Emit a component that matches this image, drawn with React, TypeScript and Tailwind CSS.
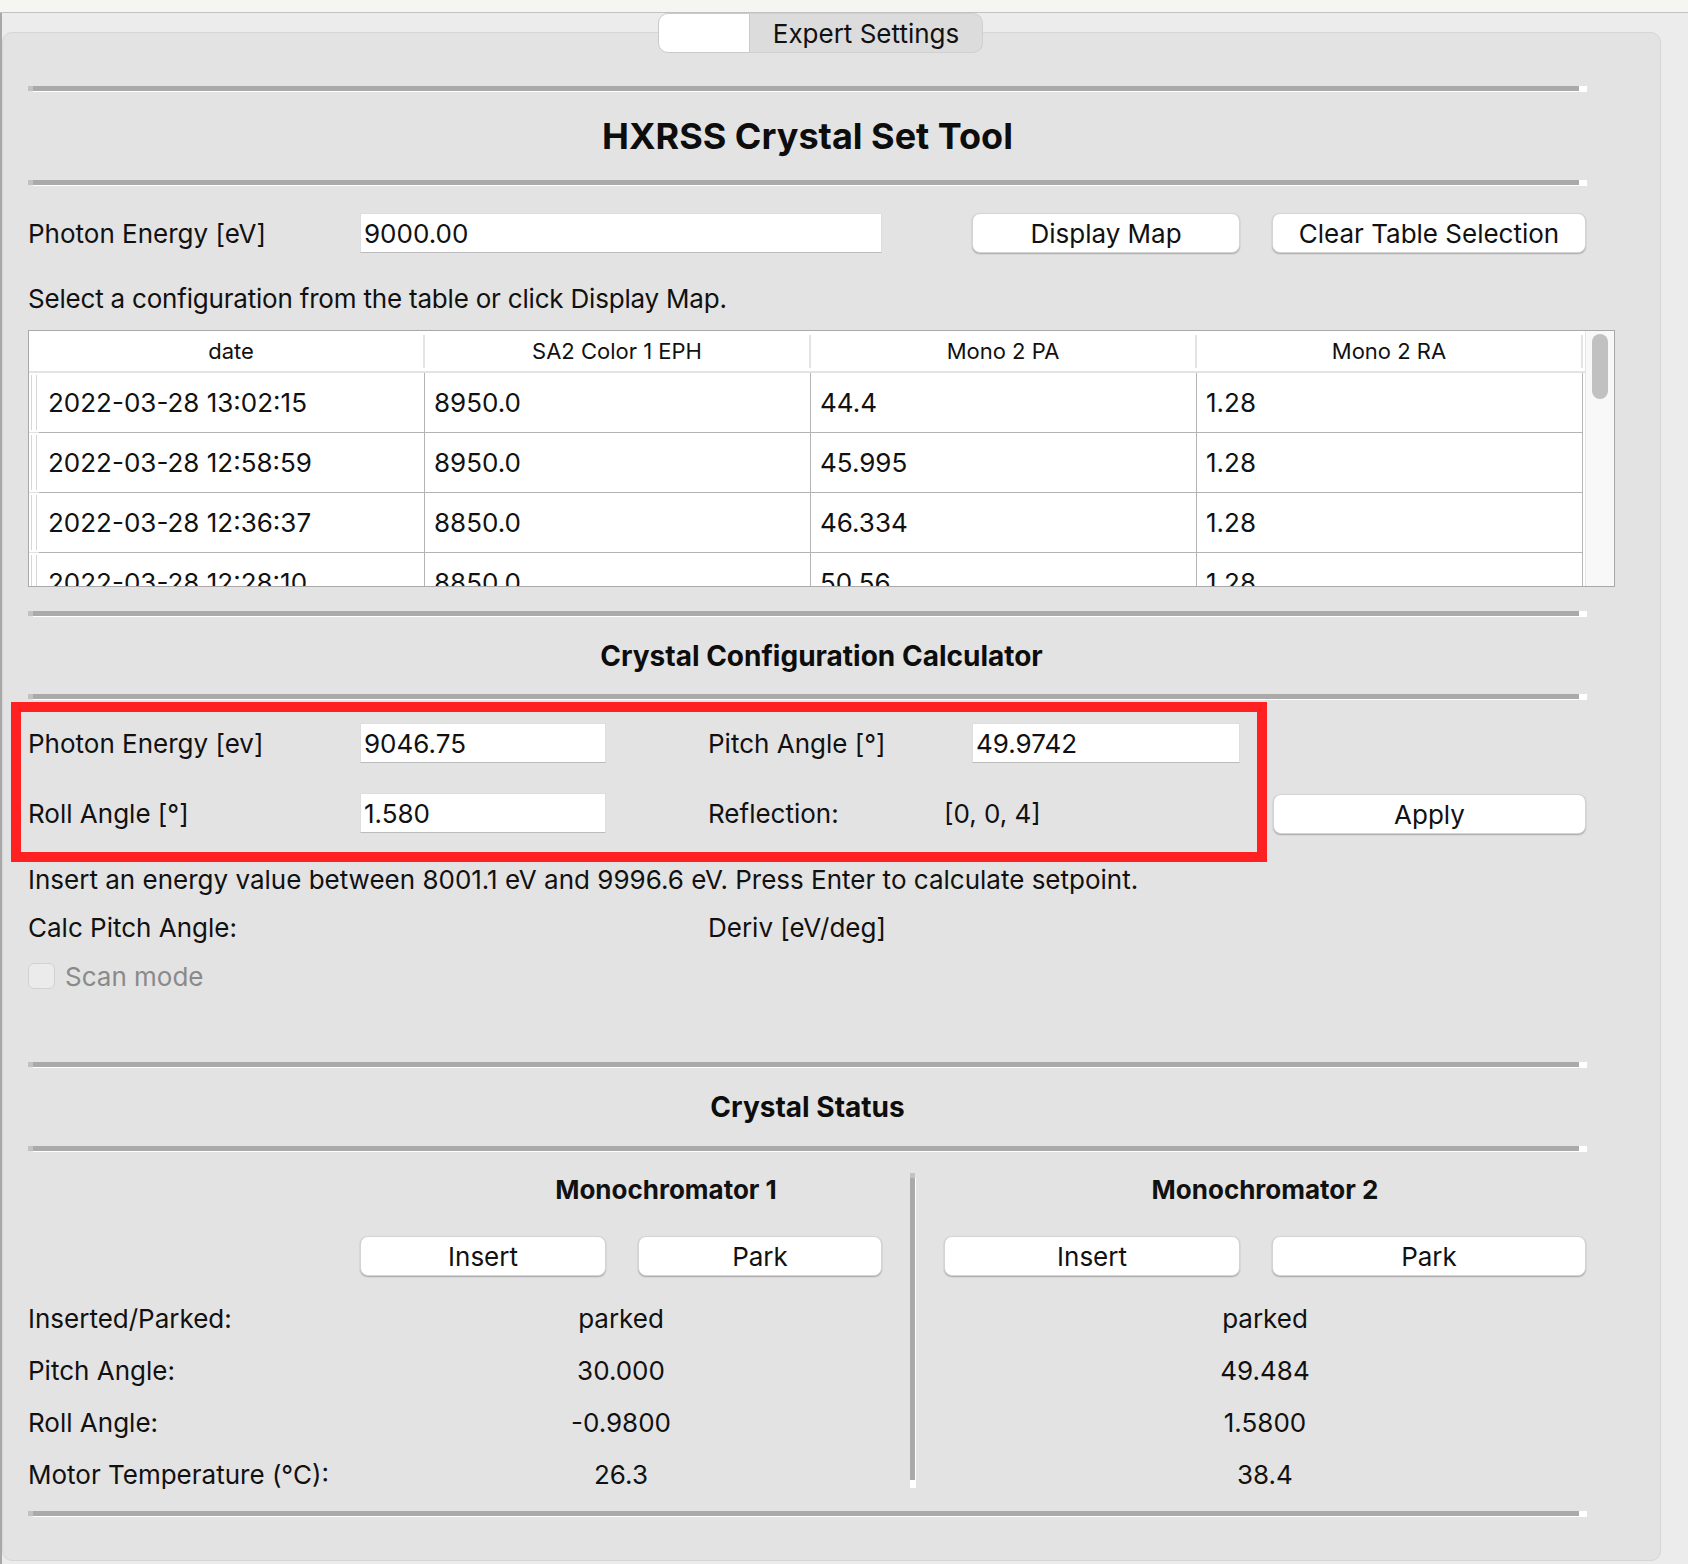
import React from "react";

function HSep() {
  return (
    <div className="w-[1559px] h-[6px] flex flex-col shrink-0">
      <div className="flex h-[5px]">
        <div className="w-[5px] bg-[#c2c2c2]" />
        <div className="flex-1 bg-[#aaaaaa]" />
        <div className="w-[8px] bg-white" />
      </div>
      <div className="h-[1px] ml-[5px] bg-white" />
    </div>
  );
}

function VSep() {
  return (
    <div className="w-[6px] h-[315px] flex shrink-0">
      <div className="w-[5px] flex flex-col">
        <div className="h-[5px] bg-[#c2c2c2]" />
        <div className="flex-1 bg-[#aaaaaa]" />
        <div className="h-[8px] bg-white" />
      </div>
      <div className="w-[1px] mt-[5px] bg-white" />
    </div>
  );
}

function Btn({ label, className }: { label: string; className: string }) {
  return (
    <div
      className={
        "h-[40px] bg-white rounded-[8px] border border-[#d4d4d4] shadow-[0_1px_1.5px_rgba(0,0,0,0.28)] flex items-center justify-center text-[26px] text-[#111] shrink-0 " +
        className
      }
    >
      {label}
    </div>
  );
}

function Input({ value, className }: { value: string; className: string }) {
  return (
    <div
      className={
        "h-[40px] bg-white border border-[#dedede] border-b-[#bcbcbc] flex items-center pl-[3px] text-[26px] text-[#111] shrink-0 " +
        className
      }
    >
      {value}
    </div>
  );
}

const rows = [
  ["2022-03-28 13:02:15", "8950.0", "44.4", "1.28"],
  ["2022-03-28 12:58:59", "8950.0", "45.995", "1.28"],
  ["2022-03-28 12:36:37", "8850.0", "46.334", "1.28"],
  ["2022-03-28 12:28:10", "8850.0", "50.56", "1.28"],
];

const headers = ["date", "SA2 Color 1 EPH", "Mono 2 PA", "Mono 2 RA"];

function Table() {
  return (
    <div className="mt-[16px] w-[1587px] h-[257px] border border-[#a9a9a9] bg-white flex overflow-hidden shrink-0">
      <div className="w-[1556px] flex flex-col">
        <div className="h-[40px] flex shrink-0">
          <div className="w-[10px]" />
          {headers.map((h, i) => (
            <div key={i} className="flex w-[386px]">
              <div className="w-[384px] flex items-center justify-center text-[22px] text-[#111]">
                {h}
              </div>
              <div className="w-[2px] h-[33px] self-center bg-[#e4e4e4]" />
            </div>
          ))}
        </div>
        <div className="h-[2px] bg-[#e3e3e3] shrink-0" />
        {rows.map((r, ri) => (
          <div key={ri} className="h-[60px] flex shrink-0">
            <div className="w-[10px] flex justify-between px-[2px] py-[2px] border-b border-[#e2e2e2]">
              <div className="w-[1px] bg-[#d6d6d6]" />
              <div className="w-[1px] bg-[#d6d6d6]" />
            </div>
            {r.map((c, ci) => (
              <div
                key={ci}
                className="w-[386px] border-r border-b border-[#b4b4b4] flex items-center pl-[9px] text-[26px] text-[#111]"
              >
                {c}
              </div>
            ))}
          </div>
        ))}
      </div>
      <div className="w-[29px] bg-[#f8f8f8] border-l border-[#e4e4e4] flex flex-col items-center pt-[3px]">
        <div className="w-[16px] h-[65px] rounded-full bg-[#c1c1c1]" />
      </div>
    </div>
  );
}

export default function App() {
  return (
    <div className="w-[1688px] h-[1564px] bg-[#ececec] overflow-hidden font-[Inter,sans-serif] text-[#111] flex flex-col">
      <div className="h-[13px] bg-[#f5f5f1] border-b border-[#c2c2c2] shrink-0" />
      <div className="flex-1 border-l-2 border-[#a8a8a8] flex flex-col">
        <div className="h-[40px] flex pl-[656px] relative z-10 shrink-0">
          <div className="w-[92px] h-[40px] bg-white border border-[#c9c9c9] rounded-l-[10px]" />
          <div className="w-[233px] h-[40px] bg-[#dcdcdc] border border-l-0 border-[#d0d0d0] rounded-r-[10px] flex items-center justify-center text-[26px] text-[#111]">
            Expert Settings
          </div>
        </div>
        <div className="-mt-[21px] w-[1659px] h-[1529px] bg-[#e3e3e3] border border-[#d6d6d6] rounded-[10px] pl-[25px] pt-[53px] flex flex-col">
          <HSep />
          <div className="h-[88px] w-[1559px] flex items-center justify-center text-[36px] font-bold text-[#0d0d0d] shrink-0">
            HXRSS Crystal Set Tool
          </div>
          <HSep />

          <div className="mt-[27px] h-[42px] flex items-start shrink-0">
            <div className="w-[332px] h-[40px] flex items-center text-[26px]">
              Photon Energy [eV]
            </div>
            <Input value="9000.00" className="w-[522px]" />
            <div className="w-[90px]" />
            <Btn label="Display Map" className="w-[268px]" />
            <div className="w-[32px]" />
            <Btn label="Clear Table Selection" className="w-[314px]" />
          </div>

          <div className="mt-[27px] h-[32px] flex items-center text-[26px] tracking-[-0.2px] shrink-0">
            Select a configuration from the table or click Display Map.
          </div>

          <Table />

          <div className="mt-[24px]">
            <HSep />
          </div>
          <div className="h-[77px] w-[1587px] flex items-center justify-center text-[28px] font-bold text-[#0d0d0d] shrink-0">
            Crystal Configuration Calculator
          </div>
          <HSep />

          <div className="mt-[2px] flex items-start shrink-0">
            <div className="-ml-[17px] w-[1256px] h-[160px] border-[10px] border-[#ff2121] pl-[7px] pt-[11px] flex flex-col">
              <div className="h-[40px] flex items-center">
                <div className="w-[332px] text-[26px]">Photon Energy [ev]</div>
                <Input value="9046.75" className="w-[246px]" />
                <div className="w-[102px]" />
                <div className="w-[264px] text-[26px]">Pitch Angle [°]</div>
                <Input value="49.9742" className="w-[268px]" />
              </div>
              <div className="mt-[30px] h-[40px] flex items-center">
                <div className="w-[332px] text-[26px]">Roll Angle [°]</div>
                <Input value="1.580" className="w-[246px]" />
                <div className="w-[102px]" />
                <div className="w-[236px] text-[26px]">Reflection:</div>
                <div className="text-[26px]">[0, 0, 4]</div>
              </div>
            </div>
            <Btn label="Apply" className="ml-[6px] mt-[92px] w-[313px]" />
          </div>

          <div className="mt-[1px] h-[32px] flex items-center text-[26px] shrink-0">
            Insert an energy value between 8001.1 eV and 9996.6 eV. Press Enter to calculate setpoint.
          </div>
          <div className="mt-[16px] h-[32px] flex items-center text-[26px] shrink-0">
            <div className="w-[680px]">Calc Pitch Angle:</div>
            <div>Deriv [eV/deg]</div>
          </div>
          <div className="mt-[17px] h-[32px] flex items-center shrink-0">
            <div className="w-[27px] h-[26px] rounded-[6px] bg-[#ebebeb] border border-[#d2d2d2]" />
            <div className="ml-[10px] text-[26px] text-[#8a8a8a]">Scan mode</div>
          </div>

          <div className="mt-[70px]">
            <HSep />
          </div>
          <div className="h-[78px] w-[1559px] flex items-center justify-center text-[28px] font-bold text-[#0d0d0d] shrink-0">
            Crystal Status
          </div>
          <HSep />

          <div className="mt-[21px] h-[327px] flex items-start shrink-0">
            <div className="w-[882px] flex flex-col">
              <div className="h-[32px] ml-[394px] w-[488px] flex items-center justify-center text-[26px] font-bold">
                Monochromator 1
              </div>
              <div className="mt-[31px] flex">
                <div className="w-[332px]" />
                <Btn label="Insert" className="w-[246px]" />
                <div className="w-[32px]" />
                <Btn label="Park" className="w-[244px]" />
              </div>
              <div className="mt-[16px] flex flex-col">
                {[
                  ["Inserted/Parked:", "parked"],
                  ["Pitch Angle:", "30.000"],
                  ["Roll Angle:", "-0.9800"],
                  ["Motor Temperature (°C):", "26.3"],
                ].map(([l, v], i) => (
                  <div key={i} className="h-[52px] flex items-center text-[26px]">
                    <div className="w-[332px]">{l}</div>
                    <div className="w-[522px] text-center">{v}</div>
                  </div>
                ))}
              </div>
            </div>
            <VSep />
            <div className="pl-[28px] w-[671px] flex flex-col">
              <div className="h-[32px] w-[642px] flex items-center justify-center text-[26px] font-bold">
                Monochromator 2
              </div>
              <div className="mt-[31px] flex">
                <Btn label="Insert" className="w-[296px]" />
                <div className="w-[32px]" />
                <Btn label="Park" className="w-[314px]" />
              </div>
              <div className="mt-[16px] flex flex-col">
                {["parked", "49.484", "1.5800", "38.4"].map((v, i) => (
                  <div key={i} className="h-[52px] w-[642px] flex items-center justify-center text-[26px]">
                    {v}
                  </div>
                ))}
              </div>
            </div>
          </div>

          <div className="mt-[11px]">
            <HSep />
          </div>
        </div>
      </div>
    </div>
  );
}
